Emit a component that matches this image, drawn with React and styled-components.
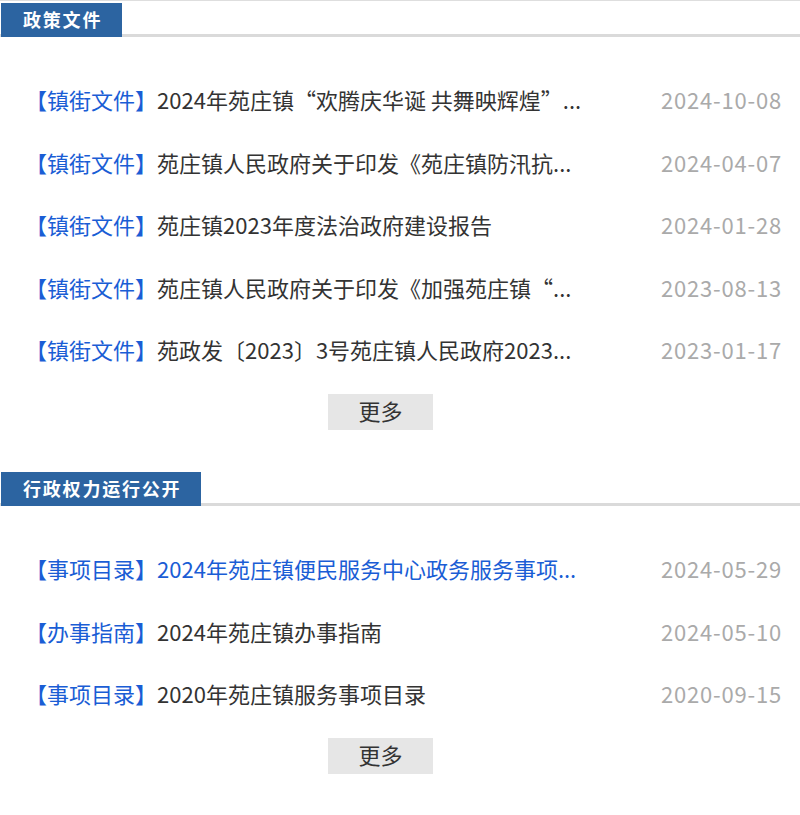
import React from "react";
import styled, { createGlobalStyle } from "styled-components";

const Global = createGlobalStyle`
  html, body { margin: 0; padding: 0; background: #fff; }
  body { font-family: "Noto Sans CJK SC", "Noto Sans", sans-serif; }
  * { box-sizing: border-box; }
`;

const Page = styled.div`
  width: 800px;
  border-top: 1px solid #dedede;
  padding-top: 2px;
`;

const Section = styled.section`
  & + & { margin-top: 42.5px; }
`;

const Header = styled.div`
  display: flex;
  height: 34px;
  border-bottom: 3px solid #dadada;
`;

const Tab = styled.h2`
  margin: 0 0 -3px 1px;
  height: 34px;
  padding: 0 20px 0 22px;
  background: #2c64a1;
  color: #fff;
  font-size: 18px;
  font-weight: 700;
  letter-spacing: 1.8px;
  line-height: 32px;
  white-space: nowrap;
`;

const List = styled.ul`
  list-style: none;
  margin: 0;
  padding: 31px 18px 0 25px;
`;

const Row = styled.li`
  display: flex;
  align-items: center;
  justify-content: space-between;
  height: 62.5px;
  font-size: 22px;
  white-space: nowrap;
`;

const Title = styled.a`
  color: ${(p) => (p.$active ? "#1a5dd5" : "#333")};
  text-decoration: none;
`;

const Tag = styled.span`
  color: #1a5dd5;
`;

const DateText = styled.span`
  color: #aaaaaa;
  letter-spacing: 0.8px;
`;

const MoreRow = styled.div`
  display: flex;
  justify-content: center;
  width: 761px;
  margin-top: 13px;
`;

const MoreButton = styled.button`
  width: 105px;
  height: 36px;
  border: none;
  background: #e6e6e6;
  color: #333;
  font-family: inherit;
  font-size: 22px;
  line-height: 32px;
  padding: 0 0 4px;
`;

const sections = [
  {
    title: "政策文件",
    items: [
      { tag: "镇街文件", text: "2024年苑庄镇“欢腾庆华诞 共舞映辉煌”...", date: "2024-10-08" },
      { tag: "镇街文件", text: "苑庄镇人民政府关于印发《苑庄镇防汛抗...", date: "2024-04-07" },
      { tag: "镇街文件", text: "苑庄镇2023年度法治政府建设报告", date: "2024-01-28" },
      { tag: "镇街文件", text: "苑庄镇人民政府关于印发《加强苑庄镇“...", date: "2023-08-13" },
      { tag: "镇街文件", text: "苑政发〔2023〕3号苑庄镇人民政府2023...", date: "2023-01-17" },
    ],
  },
  {
    title: "行政权力运行公开",
    items: [
      { tag: "事项目录", text: "2024年苑庄镇便民服务中心政务服务事项...", date: "2024-05-29", active: true },
      { tag: "办事指南", text: "2024年苑庄镇办事指南", date: "2024-05-10" },
      { tag: "事项目录", text: "2020年苑庄镇服务事项目录", date: "2020-09-15" },
    ],
  },
];

export default function App() {
  return (
    <>
      <Global />
      <Page>
        {sections.map((s) => (
          <Section key={s.title}>
            <Header>
              <Tab>{s.title}</Tab>
            </Header>
            <List>
              {s.items.map((it, i) => (
                <Row key={i}>
                  <Title href="#" $active={it.active}>
                    <Tag>【{it.tag}】</Tag>
                    {it.text}
                  </Title>
                  <DateText>{it.date}</DateText>
                </Row>
              ))}
            </List>
            <MoreRow>
              <MoreButton>更多</MoreButton>
            </MoreRow>
          </Section>
        ))}
      </Page>
    </>
  );
}
